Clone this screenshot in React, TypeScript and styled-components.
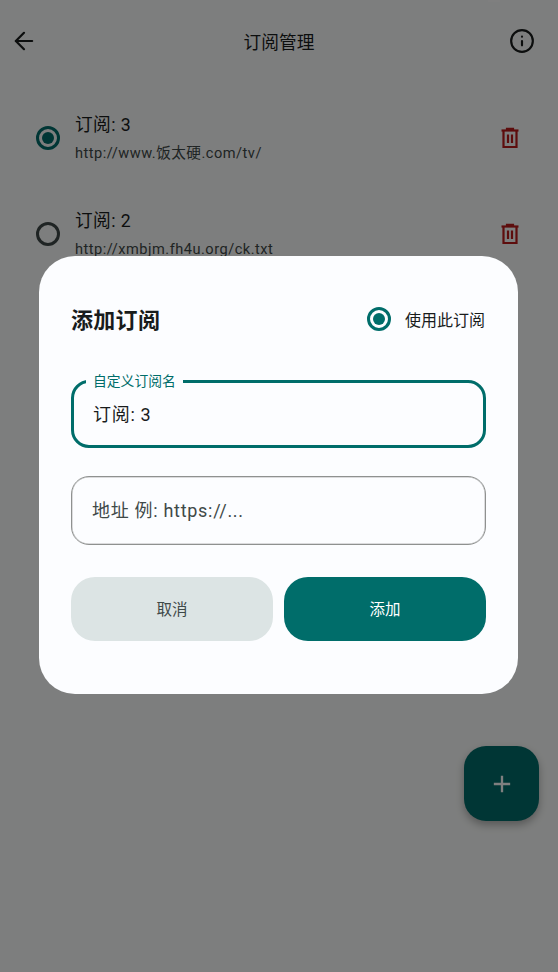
import styled, { createGlobalStyle } from 'styled-components';
import { ArrowLeft, Info } from 'lucide-react';
import { MdAdd } from 'react-icons/md';

const teal = '#006d6a';
const fontStack = `Roboto, "Noto Sans CJK SC", sans-serif`;

const GlobalStyle = createGlobalStyle`
    html, body {
        margin: 0;
        padding: 0;
        background: #fbfdfc;
    }
    * {
        box-sizing: border-box;
    }
`;

// -- PAGE UNDER THE DIALOG --
const Page = styled.div`
    position: relative;
    width: 558px;
    height: 972px;
    overflow: hidden;
    background: #fbfdfc;
    font-family: ${fontStack};
    color: #191c1c;
`;

const StatusBar = styled.div`
    display: flex;
    justify-content: flex-end;
    height: 2px;
    padding-right: 58px;
`;

const StatusGlyph = styled.div`
    width: 12px;
    height: 2px;
    background: #fff;
`;

const AppBar = styled.header`
    display: grid;
    grid-template-columns: 72px 1fr 72px;
    align-items: center;
    height: 78px;
`;

const BackSlot = styled.div`
    display: flex;
    align-items: center;
    padding-left: 10px;
    color: #191c1c;
`;

const InfoSlot = styled.div`
    display: flex;
    justify-content: center;
    align-items: center;
    color: #191c1c;
`;

const AppTitle = styled.h1`
    margin: 0;
    text-align: center;
    font-size: 17.7px;
    font-weight: 400;
`;

const List = styled.ul`
    list-style: none;
    margin: 0;
    padding: 10px 0 0 36px;
`;

const Row = styled.li`
    display: flex;
    align-items: center;
    height: 96px;
    padding-right: 36px;
`;

const RowText = styled.div`
    flex: 1;
    padding: 0 0 2px 15px;
`;

const RowTitle = styled.div`
    font-size: 17.7px;
    line-height: 26px;
    letter-spacing: 0.4px;
`;

const RowUrl = styled.div`
    margin-top: 5px;
    font-size: 14.6px;
    line-height: 20px;
    letter-spacing: 0.5px;
    color: #3f4948;
`;

const DeleteSvg = styled.svg`
    flex: none;
    color: #ba1a1a;
`;

const DeleteIcon = () => (
    <DeleteSvg width="24" height="24" viewBox="0 0 24 24" fill="none" stroke="currentColor" strokeWidth="2.2">
        <path d="M3.5 4.5h17" />
        <path d="M9 4.5V2.8h6v1.7" />
        <path d="M5.5 4.5V21h13V4.5" />
        <path d="M10 8.5v8.5M14 8.5v8.5" />
    </DeleteSvg>
);

const Radio = styled.span<{ $on: boolean }>`
    display: flex;
    flex: none;
    justify-content: center;
    align-items: center;
    width: 24px;
    height: 24px;
    border: 3px solid ${({ $on }) => ($on ? teal : '#3f4948')};
    border-radius: 50%;

    &::after {
        content: '';
        display: ${({ $on }) => ($on ? 'block' : 'none')};
        width: 12px;
        height: 12px;
        border-radius: 50%;
        background: ${teal};
    }
`;

const Fab = styled.button`
    position: absolute;
    right: 19px;
    bottom: 151px;
    display: flex;
    justify-content: center;
    align-items: center;
    width: 75px;
    height: 75px;
    padding: 0;
    border: 0;
    border-radius: 22px;
    background: ${teal};
    color: #fff;
    box-shadow: 0 4px 8px rgba(0, 0, 0, 0.3);
`;

// -- DIALOG --
const Scrim = styled.div`
    position: absolute;
    inset: 0;
    display: flex;
    align-items: flex-start;
    padding: 256px 40px 0 39px;
    background: rgba(0, 0, 0, 0.5);
`;

const Dialog = styled.section`
    width: 479px;
    height: 438px;
    padding: 32px;
    border-radius: 36px;
    background: #fcfdff;
`;

const DialogHead = styled.div`
    display: flex;
    justify-content: space-between;
    align-items: center;
    height: 64px;
    padding-bottom: 2px;
`;

const DialogTitle = styled.h2`
    margin: 0;
    padding: 0 0 2px 0;
    font-size: 22px;
    font-weight: 700;
    letter-spacing: 0.3px;
    color: #191c1c;
`;

const UseToggle = styled.label`
    display: flex;
    align-items: center;
    gap: 14px;
    padding-right: 1px;
    font-size: 16px;
    color: #191c1c;
`;

const Field = styled.div<{ $focused?: boolean }>`
    position: relative;
    display: flex;
    align-items: center;
    height: ${({ $focused }) => ($focused ? '68px' : '69px')};
    margin-top: 28px;
    padding: ${({ $focused }) => ($focused ? '0 19px 2px' : '0 20px')};
    border: ${({ $focused }) => ($focused ? `3px solid ${teal}` : '1px solid #8f9190')};
    border-radius: 18px;
    box-shadow: ${({ $focused }) => ($focused ? 'none' : 'inset 0 0 0 0.5px rgba(143, 145, 144, 0.6)')};
`;

const FieldLabel = styled.span`
    position: absolute;
    top: -10px;
    left: 12px;
    padding: 0 7px;
    background: #fcfdff;
    font-size: 13.8px;
    line-height: 16px;
    color: ${teal};
`;

const FieldText = styled.input`
    width: 100%;
    padding: 0;
    border: 0;
    outline: 0;
    background: transparent;
    font-family: ${fontStack};
    font-size: 18px;
    letter-spacing: 0.7px;
    color: #191c1c;

    &::placeholder {
        color: #3f4948;
        opacity: 1;
    }
`;

const Actions = styled.div`
    display: grid;
    grid-template-columns: 202px 202px;
    justify-content: space-between;
    margin-top: 32px;
`;

const ActionButton = styled.button<{ $primary?: boolean }>`
    height: 64px;
    padding: 0 0 3px;
    border: 0;
    border-radius: 24px;
    background: ${({ $primary }) => ($primary ? teal : '#dce4e4')};
    font-family: ${fontStack};
    font-size: 15.5px;
    color: ${({ $primary }) => ($primary ? '#fff' : '#3f4948')};
`;

const subscriptions = [
    { name: '订阅: 3', url: 'http://www.饭太硬.com/tv/', active: true },
    { name: '订阅: 2', url: 'http://xmbjm.fh4u.org/ck.txt', active: false },
];

const App = () => {
    return (
        <Page>
            <GlobalStyle />
            <StatusBar><StatusGlyph /></StatusBar>
            <AppBar>
                <BackSlot><ArrowLeft size={28} strokeWidth={1.9} /></BackSlot>
                <AppTitle>订阅管理</AppTitle>
                <InfoSlot><Info size={26} strokeWidth={2} /></InfoSlot>
            </AppBar>
            <List>
                {subscriptions.map((item) => (
                    <Row key={item.name}>
                        <Radio $on={item.active} />
                        <RowText>
                            <RowTitle>{item.name}</RowTitle>
                            <RowUrl>{item.url}</RowUrl>
                        </RowText>
                        <DeleteIcon />
                    </Row>
                ))}
            </List>
            <Fab><MdAdd size={28} /></Fab>

            <Scrim>
                <Dialog>
                    <DialogHead>
                        <DialogTitle>添加订阅</DialogTitle>
                        <UseToggle>
                            <Radio $on />
                            使用此订阅
                        </UseToggle>
                    </DialogHead>
                    <Field $focused>
                        <FieldLabel>自定义订阅名</FieldLabel>
                        <FieldText readOnly value="订阅: 3" />
                    </Field>
                    <Field>
                        <FieldText readOnly placeholder="地址 例: https://..." />
                    </Field>
                    <Actions>
                        <ActionButton>取消</ActionButton>
                        <ActionButton $primary>添加</ActionButton>
                    </Actions>
                </Dialog>
            </Scrim>
        </Page>
    );
};

export default App;
